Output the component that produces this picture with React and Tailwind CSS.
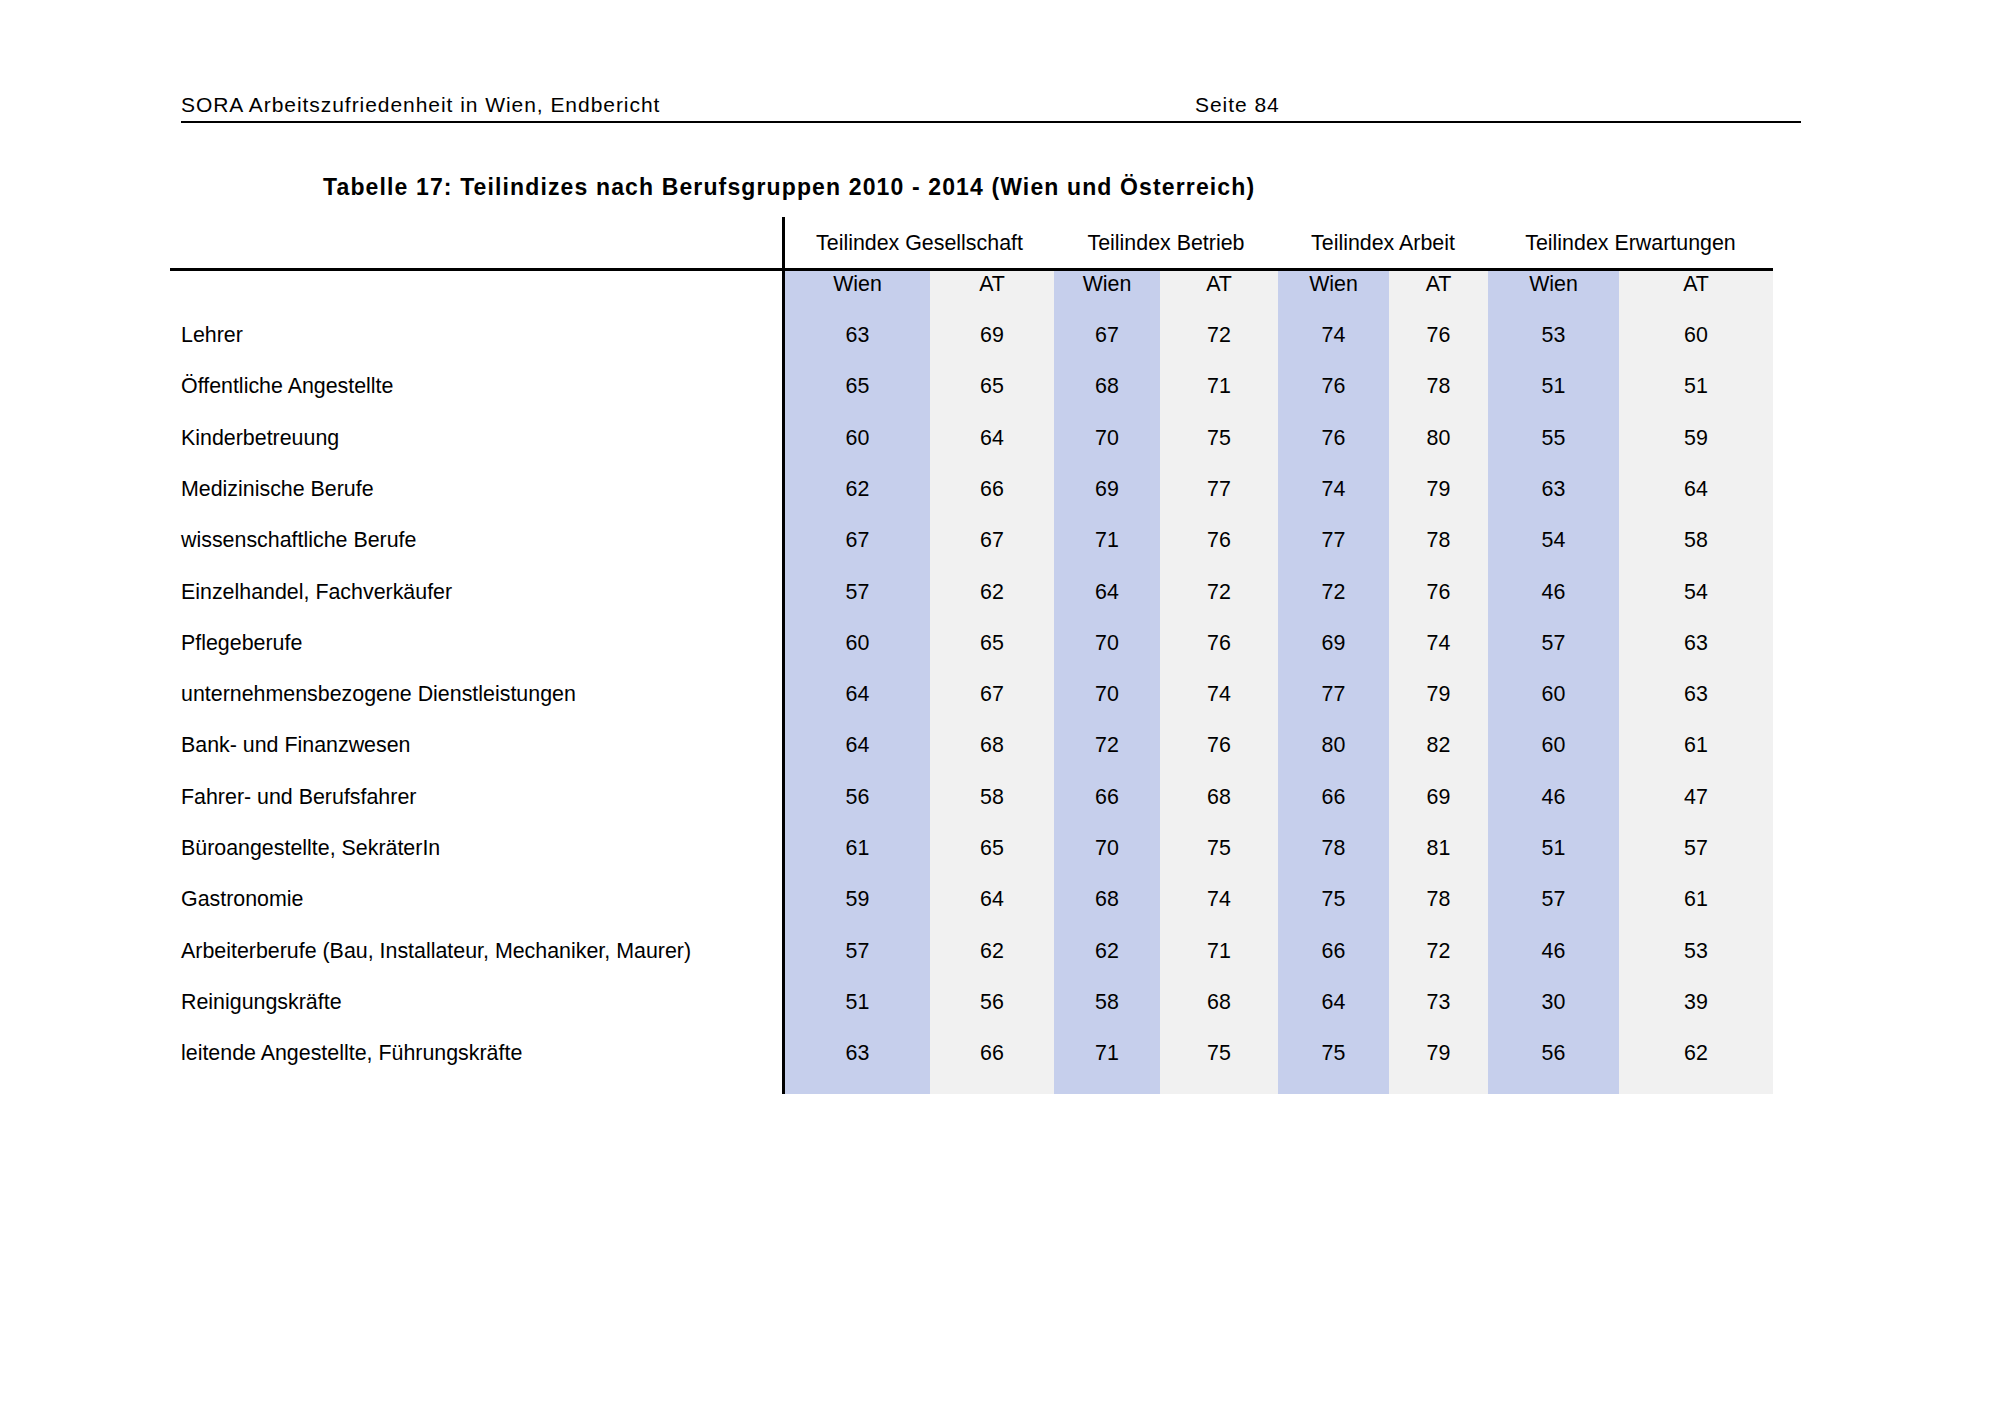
import React from "react";

const rows = [
  ["Lehrer", 63, 69, 67, 72, 74, 76, 53, 60],
  ["Öffentliche Angestellte", 65, 65, 68, 71, 76, 78, 51, 51],
  ["Kinderbetreuung", 60, 64, 70, 75, 76, 80, 55, 59],
  ["Medizinische Berufe", 62, 66, 69, 77, 74, 79, 63, 64],
  ["wissenschaftliche Berufe", 67, 67, 71, 76, 77, 78, 54, 58],
  ["Einzelhandel, Fachverkäufer", 57, 62, 64, 72, 72, 76, 46, 54],
  ["Pflegeberufe", 60, 65, 70, 76, 69, 74, 57, 63],
  ["unternehmensbezogene Dienstleistungen", 64, 67, 70, 74, 77, 79, 60, 63],
  ["Bank- und Finanzwesen", 64, 68, 72, 76, 80, 82, 60, 61],
  ["Fahrer- und Berufsfahrer", 56, 58, 66, 68, 66, 69, 46, 47],
  ["Büroangestellte, SekräterIn", 61, 65, 70, 75, 78, 81, 51, 57],
  ["Gastronomie", 59, 64, 68, 74, 75, 78, 57, 61],
  ["Arbeiterberufe (Bau, Installateur, Mechaniker, Maurer)", 57, 62, 62, 71, 66, 72, 46, 53],
  ["Reinigungskräfte", 51, 56, 58, 68, 64, 73, 30, 39],
  ["leitende Angestellte, Führungskräfte", 63, 66, 71, 75, 75, 79, 56, 62],
];

const cols = [
  "w-[145px] bg-[#c6cfec]",
  "w-[124px] bg-[#f1f1f1]",
  "w-[106px] bg-[#c6cfec]",
  "w-[118px] bg-[#f1f1f1]",
  "w-[111px] bg-[#c6cfec]",
  "w-[99px] bg-[#f1f1f1]",
  "w-[131px] bg-[#c6cfec]",
  "w-[154px] bg-[#f1f1f1]",
];

const subHeads = ["Wien", "AT", "Wien", "AT", "Wien", "AT", "Wien", "AT"];

export default function App() {
  return (
    <div
      className="w-[2000px] h-[1413px] bg-white text-black relative"
      style={{ fontFamily: '"Liberation Sans", Arial, sans-serif' }}
    >
      {/* Page header */}
      <div className="pt-[92px] pl-[181px] w-[1801px]">
        <div className="flex items-end h-[26px] text-[21px] leading-[26px] tracking-[0.95px]">
          <div className="w-[1014px]">SORA Arbeitszufriedenheit in Wien, Endbericht</div>
          <div>Seite 84</div>
        </div>
        <div className="mt-[3px] h-[2px] bg-black w-[1620px]" />
      </div>

      {/* Title */}
      <div className="pl-[323px] mt-[50px] text-[23px] leading-[28px] font-bold tracking-[1.13px]">
        Tabelle 17: Teilindizes nach Berufsgruppen 2010 - 2014 (Wien und Österreich)
      </div>

      {/* Table */}
      <div className="ml-[170px] mt-[16px] w-[1603px] text-[21.4px]">
        {/* Group header */}
        <div className="flex h-[51px]">
          <div className="w-[612px]" />
          <div className="flex border-l-[3px] border-black items-center pt-[1px]">
            <div className="w-[269px] text-center">Teilindex Gesellschaft</div>
            <div className="w-[224px] text-center">Teilindex Betrieb</div>
            <div className="w-[210px] text-center">Teilindex Arbeit</div>
            <div className="w-[285px] text-center">Teilindex Erwartungen</div>
          </div>
        </div>
        <div className="h-[3px] bg-black" />

        {/* Sub header */}
        <div className="flex h-[38.5px]">
          <div className="w-[612px]" />
          <div className="flex border-l-[3px] border-black">
            {subHeads.map((s, i) => (
              <div key={i} className={`${cols[i]} text-center leading-[24px] pt-[1px]`}>
                {s}
              </div>
            ))}
          </div>
        </div>

        {/* Data rows */}
        {rows.map((r, ri) => (
          <div key={ri} className="flex h-[51.3px]">
            <div className="w-[612px] pl-[11px] flex items-center">{r[0]}</div>
            <div className="flex border-l-[3px] border-black">
              {r.slice(1).map((v, i) => (
                <div key={i} className={`${cols[i]} flex items-center justify-center`}>
                  {v}
                </div>
              ))}
            </div>
          </div>
        ))}
        <div className="flex h-[15px]">
          <div className="w-[612px]" />
          <div className="flex border-l-[3px] border-black">
            {cols.map((c, i) => (
              <div key={i} className={c} />
            ))}
          </div>
        </div>
      </div>
    </div>
  );
}
